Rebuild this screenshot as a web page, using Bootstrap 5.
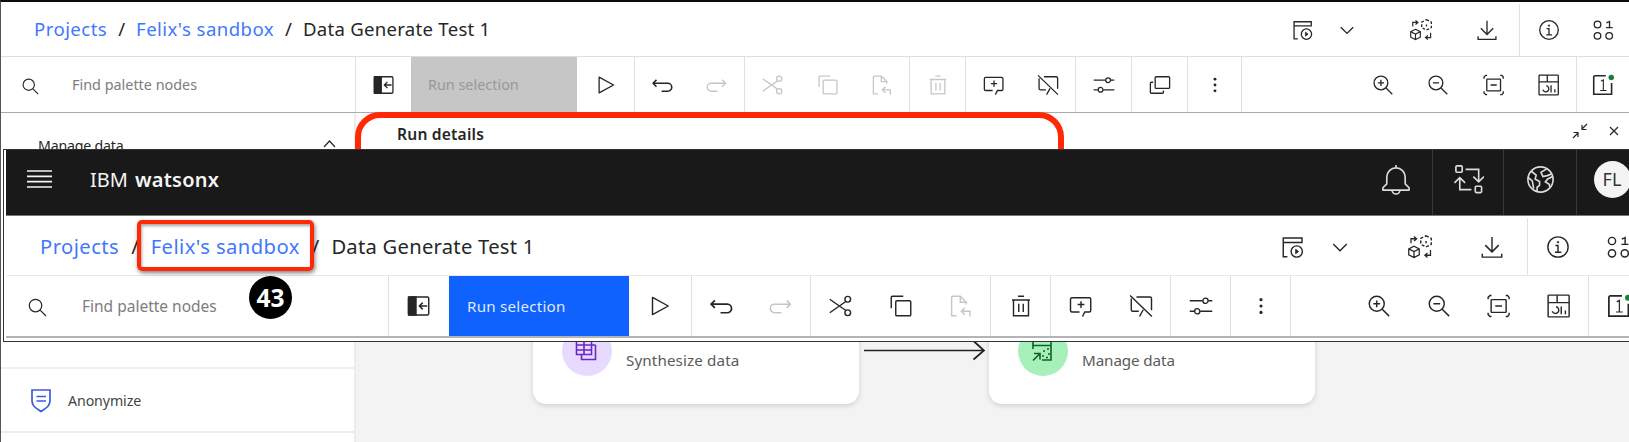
<!DOCTYPE html>
<html lang="en">
<head>
<meta charset="utf-8">
<title>IBM watsonx</title>
<link rel="stylesheet" href="https://cdn.jsdelivr.net/npm/bootstrap@5.3.0/dist/css/bootstrap.min.css">
<style>
body{width:1629px;height:442px;overflow:hidden;position:relative;background:#fff;font-family:"Noto Sans","Open Sans",sans-serif;color:#262626;line-height:1.2;white-space:nowrap}
svg{fill:none;stroke:currentColor;stroke-width:1.9;flex:none;overflow:visible}
.ic{width:22px;height:22px}
.cell{display:flex;align-items:center;justify-content:center;flex:none;width:55px}
.sep{border-right:1px solid #e0e0e0}
.dim{color:#c6c6c6}
a{color:#3f78ff;text-decoration:none}
.hint{color:#7d7d7d}
.path-part{letter-spacing:.44px}
.path-leaf{letter-spacing:.26px}
.base{height:442px;border-top:2px solid #0c0c0c;border-left:1px solid #555}
.base .crumbs{height:55px;border-bottom:1px solid #dedede;font-size:18.6px}
.base nav{gap:11px;padding:1px 0 0 33px}
.base .tools{height:56px;border-bottom:1px solid #aaa}
.base .find{width:355px;padding-left:20px;font-size:14.4px}
.base .find .hint{padding-top:1px}
.base .run{width:166px;background:#c6c6c6;color:#989898;font-size:14.4px;padding-left:17px;justify-content:flex-start}
.side{width:355px;border-right:2px solid #ececec;background:#fff}
.side .group{height:256px;padding:24px 18px 0 37px;font-size:14.2px;letter-spacing:-.2px;border-bottom:2px solid #efefef}
.side .group .chevron{margin-top:3px}
.side .group .sub{margin-top:174px}
.side .item{height:64px;border-bottom:2px solid #ececec;padding:2px 0 0 28px;font-size:14.2px;letter-spacing:-.1px;color:#444}
.details{height:60px;background:#fff}
.details .ring{left:-1px;top:-1px;width:709px;height:90px;border:6.5px solid #ff2a05;border-radius:25px}
.details h2{font-size:15.6px;font-weight:600;letter-spacing:.2px;margin:0;padding:12px 0 0 41px}
.stage{background:#f3f3f3}
.node{top:30px;width:326px;height:201px;background:#fff;border-radius:13px;box-shadow:0 2px 5px rgba(0,0,0,.14);font-size:15.2px;color:#5a5a5a}
.node .disc{width:50px;height:50px;border-radius:50%;margin:123px 14px 0 29px}
.node .kind{margin-top:148px}
.front{left:3px;top:149px;width:1626px;height:193px;background:#fff;border:1px solid #333;border-right:0;padding-left:2px;overflow:hidden}
.front .ic{width:24px;height:24px}
.front .cell{width:60px}
.front .top{height:66px;width:1650px;background:#191919;border-bottom:1px solid #777;color:#f4f4f4;font-size:20px}
.front .top .sep{border-color:#393939}
.front .top .brand{gap:7px;margin:-5px 0 0 38px}
.front .crumbs{height:60px;width:1650px;border-bottom:1px solid #e8e8e8;font-size:20.2px}
.front nav{gap:12px;padding:1px 0 0 34px}
.front .tools{height:62px;width:1650px;border-bottom:2px solid #b4b4b4}
.front .find{width:383px;padding-left:21px;font-size:15.5px}
.front .find .hint{padding-top:1px}
.front .run{width:180px;background:#0f62fe;color:#dfe9ff;font-size:15.2px;letter-spacing:.22px;padding-left:18px;justify-content:flex-start}
.front .top .ic{width:31px;height:31px;stroke-width:1.7;color:#dcdcdc}
.front .top .cell{padding-bottom:6px}
.avatar{width:37px;height:37px;border-radius:50%;background:#f4f4f4;color:#333;font-size:18px}
.mark-box{left:137px;top:220px;width:177px;height:51px;border:4.5px solid #ff2a05;border-radius:5px;box-shadow:1px 2px 4px rgba(0,0,0,.5),inset 1px 2px 3px rgba(0,0,0,.35)}
.step{left:249px;top:276px;width:43px;height:43px;border-radius:50%;background:#000;color:#fff;font:700 24.5px "Open Sans",sans-serif}
.step span{margin-top:-1px}
</style>
</head>
<body>
<svg width="0" height="0" class="position-absolute">
<symbol id="search" viewBox="0 0 32 32"><circle cx="13" cy="13" r="9.5"/><path d="M20 20l9 9"/></symbol>
<symbol id="panel" viewBox="0 0 32 32"><rect x="2" y="4" width="27" height="24" rx="2"/><path d="M2 4h10v24H2z" fill="currentColor"/><path d="M27 16H17M21 11.500l-4.500 4.500 4.500 4.500"/></symbol>
<symbol id="play" viewBox="0 0 32 32"><path d="M6 4.500L27 16 6 27.500z" stroke-linejoin="round"/></symbol>
<symbol id="undo" viewBox="0 0 32 32"><path d="M6.500 8.500L1.500 13.500l5 5M1.500 13.500h21.500a5.700 5.700 0 0 1 0 11.500h-9" stroke-width="2.300"/></symbol>
<symbol id="redo" viewBox="0 0 32 32"><path d="M23.500 8.500l5 5-5 5M28.500 13.500h-21a5.700 5.700 0 0 0 0 11.500h9" stroke-width="2"/></symbol>
<symbol id="cut" viewBox="0 0 32 32"><circle cx="25" cy="7" r="3.800"/><circle cx="25" cy="25" r="3.800"/><path d="M1 7l21.500 15M1 25L22.500 10"/></symbol>
<symbol id="copy" viewBox="0 0 32 32"><rect x="9" y="9" width="20" height="20" rx="1.500"/><path d="M3 19V4.500A1.500 1.500 0 0 1 4.500 3H19"/></symbol>
<symbol id="paste" viewBox="0 0 32 32"><path d="M10 29H3.500V4.500A1.500 1.500 0 0 1 5 3h10l8 8v3M15 3v8h8M28 30v-7H17M21 18.500L16.500 23l4.500 4.500"/></symbol>
<symbol id="trash" viewBox="0 0 32 32"><path d="M4 8h24M12 3h8M6 8v21h20V8M13 13v11M19 13v11"/></symbol>
<symbol id="note" viewBox="0 0 32 32"><path d="M14 24H4a2 2 0 0 1-2-2V7a2 2 0 0 1 2-2h23a2 2 0 0 1 2 2v15a2 2 0 0 1-2 2h-6l-3 6M16 9.500v9M11.500 14h9"/></symbol>
<symbol id="noteoff" viewBox="0 0 32 32"><path d="M1.500 2l29 28M10 4h18a2 2 0 0 1 2 2v15.500M3 6v15a2 2 0 0 0 2 2h8M14 30l5-9"/></symbol>
<symbol id="sliders" viewBox="0 0 32 32"><path d="M1 9h17M26 9h5M1 23h6M15 23h16"/><circle cx="22" cy="9" r="3.500"/><circle cx="11" cy="23" r="3.500"/></symbol>
<symbol id="windows" viewBox="0 0 32 32"><rect x="9" y="4" width="21" height="17" rx="1.500"/><path d="M6 12H3.500A1.500 1.500 0 0 0 2 13.500v13A1.500 1.500 0 0 0 3.500 28h16a1.500 1.500 0 0 0 1.500-1.500V24"/></symbol>
<symbol id="dots" viewBox="0 0 32 32"><g fill="currentColor" stroke="none"><circle cx="16" cy="7.500" r="2.100"/><circle cx="16" cy="16" r="2.100"/><circle cx="16" cy="24.500" r="2.100"/></g></symbol>
<symbol id="zoomin" viewBox="0 0 32 32"><circle cx="13" cy="13" r="10"/><path d="M20 20l9.500 9.500M13 8.500v9M8.500 13h9"/></symbol>
<symbol id="zoomout" viewBox="0 0 32 32"><circle cx="13" cy="13" r="10"/><path d="M20 20l9.500 9.500M8.500 13h9"/></symbol>
<symbol id="fit" viewBox="0 0 32 32"><rect x="5.500" y="7.500" width="20" height="17" rx="1"/><path d="M11 16h9M1.500 7V4.500L4 2h2M25 2h2.500L29.500 4.500V7M1.500 25v2.500L4 30h2M25 30h2.500l2-2.500V25"/></symbol>
<symbol id="dash" viewBox="0 0 32 32"><rect x="1.500" y="1.500" width="28" height="29" rx="1"/><path d="M1.500 11.500h28M13.500 1.500v10M12 17a4.500 4.500 0 1 1-5 6M19 16.500V27M24.500 22v5"/></symbol>
<symbol id="count" viewBox="0 0 32 32"><path d="M20 2.500H4.500a2 2 0 0 0-2 2v25h26V13" stroke-width="2.300"/><path d="M13 10.500l3.500-2v15M12 24h9" stroke-width="1.600"/><circle cx="28" cy="5" r="4" fill="#198038" stroke="none"/></symbol>
<symbol id="job" viewBox="0 0 32 32"><path d="M8.500 29H3V4h25v7M3 10h25"/><circle cx="21" cy="22" r="7.500"/><path d="M19.500 19l4 3-4 3z" fill="currentColor" stroke-width="1"/></symbol>
<symbol id="chev" viewBox="0 0 32 32"><path d="M7 12L16 21 25 12"/></symbol>
<symbol id="cube" viewBox="0 0 32 32"><path d="M8 15l7 3.500v8L8 30l-7-3.500v-8zM1 18.500L8 22l7-3.500M8 22v8M4 11V5h7M8 2l3.500 3L8 8M30 20v7h-7M26 24l-3.500 3 3.500 3" stroke-width="1.700"/><path d="M24 1l7 3.500v8L24 16l-7-3.500v-8zM24 8v3" stroke-dasharray="4 2.500" stroke-width="1.900"/></symbol>
<symbol id="down" viewBox="0 0 32 32"><path d="M16 2.500V22M7 13.500l9 9 9-9M3 25v4.500h26V25"/></symbol>
<symbol id="info" viewBox="0 0 32 32"><circle cx="16" cy="16" r="13.500"/><path d="M12.500 14H16v9M12 23h8.500"/><circle cx="16" cy="9.500" r="1.300" fill="currentColor" stroke-width=".5"/></symbol>
<symbol id="bits" viewBox="0 0 32 32"><circle cx="8" cy="8" r="4.800"/><circle cx="8" cy="24.500" r="4.800"/><circle cx="25" cy="24.500" r="4.800"/><path d="M21 5.500l4.500-2v9M20.500 12.500h9.500"/></symbol>
<symbol id="bell" viewBox="0 0 32 32"><path d="M16.500 1v3M16.500 4a9.500 9.500 0 0 0-9.500 9.500v7l-4 4v2.500h27v-2.500l-4-4v-7A9.500 9.500 0 0 0 16.500 4zM12.500 27a4 4 0 0 0 8 0" stroke-linejoin="round"/></symbol>
<symbol id="swap" viewBox="0 0 32 32"><rect x="3" y="2" width="6.500" height="6.500" rx="1"/><rect x="23" y="23" width="6.500" height="6.500" rx="1"/><path d="M13 5.500h13.500V18M21 13l5.500 5.500L32 13M19 26.500H7V14M1.500 19.500L7 14l5.500 5.500"/></symbol>
<symbol id="globe" viewBox="0 0 32 32"><circle cx="16" cy="16" r="13"/><path d="M6.500 7.500l5 4-1 4 4.500 2.500v4l-2.500 2v4.500M3.500 14l4 3.500 1.500 8M22.500 5l-6 3.500 2 4.500 4.500-1 5-2M28.500 13l-5 2.500-2.500 3 4 2.500 1 4"/></symbol>
</svg>

<main class="base d-flex flex-column">
  <header class="crumbs d-flex align-items-center flex-shrink-0">
    <nav class="d-flex">
      <a href="#" class="path-part">Projects</a><span>/</span><a href="#" class="path-part">Felix's sandbox</a><span>/</span><span class="path-leaf">Data Generate Test 1</span>
    </nav>
    <div class="d-flex h-100 ms-auto" style="padding-top:2px">
      <div class="cell" style="width:45px"><svg class="ic"><use href="#job"/></svg></div>
      <div class="cell" style="width:44px"><svg class="ic"><use href="#chev"/></svg></div>
      <div class="cell" style="width:68px;margin-left:18px"><svg class="ic"><use href="#cube"/></svg></div>
      <div class="cell sep" style="width:65px"><svg class="ic"><use href="#down"/></svg></div>
      <div class="cell" style="width:57px"><svg class="ic"><use href="#info"/></svg></div>
      <div class="cell" style="width:52px"><svg class="ic"><use href="#bits"/></svg></div>
    </div>
  </header>
  <div class="tools d-flex flex-shrink-0">
    <div class="find sep d-flex align-items-center flex-shrink-0"><svg style="width:19px;height:19px;margin-top:3px"><use href="#search"/></svg><span class="hint" style="margin-left:32px">Find palette nodes</span></div>
    <div class="cell"><svg class="ic"><use href="#panel"/></svg></div>
    <div class="cell run"><span>Run selection</span></div>
    <div class="cell sep" style="width:58px"><svg class="ic"><use href="#play"/></svg></div>
    <div class="cell"><svg class="ic"><use href="#undo"/></svg></div>
    <div class="cell dim sep"><svg class="ic"><use href="#redo"/></svg></div>
    <div class="cell dim"><svg class="ic"><use href="#cut"/></svg></div>
    <div class="cell dim"><svg class="ic"><use href="#copy"/></svg></div>
    <div class="cell dim sep"><svg class="ic"><use href="#paste"/></svg></div>
    <div class="cell dim sep" style="width:56px"><svg class="ic"><use href="#trash"/></svg></div>
    <div class="cell"><svg class="ic"><use href="#note"/></svg></div>
    <div class="cell sep"><svg class="ic"><use href="#noteoff"/></svg></div>
    <div class="cell sep" style="width:56px"><svg class="ic"><use href="#sliders"/></svg></div>
    <div class="cell sep" style="width:56px"><svg class="ic"><use href="#windows"/></svg></div>
    <div class="cell sep" style="width:54px"><svg class="ic"><use href="#dots"/></svg></div>
    <div class="d-flex ms-auto">
      <div class="cell"><svg class="ic"><use href="#zoomin"/></svg></div>
      <div class="cell" style="width:56px"><svg class="ic"><use href="#zoomout"/></svg></div>
      <div class="cell"><svg class="ic"><use href="#fit"/></svg></div>
      <div class="cell sep" style="width:56px"><svg class="ic"><use href="#dash"/></svg></div>
      <div class="cell" style="width:52px"><svg class="ic"><use href="#count"/></svg></div>
    </div>
  </div>
  <div class="d-flex flex-grow-1">
    <aside class="side flex-shrink-0">
      <div class="group">
        <div class="d-flex justify-content-between align-items-start"><span>Manage data</span><svg class="chevron" width="13" height="8" viewBox="0 0 13 8"><path stroke-width="1.200" d="M1 7l5.500-6L12 7"/></svg></div>
        <div class="sub">Mask data</div>
      </div>
      <div class="item d-flex align-items-center"><svg width="24" height="26" viewBox="0 0 24 26"><path stroke="#3a5be0" stroke-width="1.700" d="M3 2h18v11c0 5-4 7-9 10.500C7 20 3 18 3 13zM7.500 8.500h9.500M7.500 13h9.500"/></svg><span style="margin-left:15px">Anonymize</span></div>
    </aside>
    <div class="flex-grow-1 d-flex flex-column">
      <section class="details position-relative flex-shrink-0">
        <div class="ring position-absolute"></div>
        <div class="d-flex justify-content-between">
          <h2>Run details</h2>
          <div class="d-flex" style="padding:10px 10px 0 0;gap:21px">
            <svg width="16" height="16" viewBox="0 0 16 16"><path stroke-width="1.200" d="M15 1l-5 5M10 2v4.500h4.500M1 15l5-5M1.500 9.500H6V14"/></svg>
            <svg width="10" height="16" viewBox="0 0 10 16"><path stroke-width="1.200" d="M1 4l8 8M9 4l-8 8"/></svg>
          </div>
        </div>
      </section>
      <section class="stage flex-grow-1 position-relative">
        <article class="node position-absolute d-flex" style="left:177px"><span class="disc d-flex align-items-center justify-content-center" style="background:#e8daff"><svg width="22" height="22" viewBox="0 0 22 22"><path stroke="#6929c4" stroke-width="1.600" d="M.5 0h15v14.500H.5zM.5 5h15M.5 10h15M8 0v14.500M19.500 5v14.500h-14v-5M16 5h3.500"/></svg></span><span class="kind" style="letter-spacing:.12px">Synthesize data</span></article>
        <svg class="position-absolute" style="left:508px;top:166px" width="122" height="24" viewBox="0 0 122 24"><path stroke="#222" stroke-width="1.700" d="M0 11.500h120M109.500 2L120 11.500l-10.500 9"/></svg>
        <article class="node position-absolute d-flex" style="left:633px"><span class="disc d-flex align-items-center justify-content-center" style="background:#a7f0ba"><svg width="22" height="22" viewBox="0 0 22 22"><path stroke="#0e6027" stroke-width="1.600" d="M1 9V0h18v20h-9M1 5.500h18M1 20.500L7.500 14M2 13.500h6v6M11 11h2M16 14h2M10 16h2M14 17.500h2M15 9h2"/></svg></span><span class="kind" style="letter-spacing:-.1px">Manage data</span></article>
      </section>
    </div>
  </div>
</main>

<section class="front position-absolute">
  <header class="top d-flex align-items-center">
    <svg width="25" height="20" viewBox="0 0 25 20" style="margin-left:21px;margin-top:-7px"><path stroke-width="1.700" d="M0 2h25M0 7.300h25M0 12.700h25M0 18h25"/></svg>
    <div class="brand d-flex"><span>IBM</span><b class="fw-semibold" style="letter-spacing:.25px">watsonx</b></div>
    <div class="d-flex h-100 ms-auto">
      <div class="cell sep" style="width:74px"><svg class="ic"><use href="#bell"/></svg></div>
      <div class="cell sep" style="width:71px"><svg class="ic"><use href="#swap"/></svg></div>
      <div class="cell sep" style="width:73px"><svg class="ic"><use href="#globe"/></svg></div>
      <div class="cell" style="width:79px;padding-right:9px"><span class="avatar d-flex align-items-center justify-content-center">FL</span></div>
    </div>
  </header>
  <div class="crumbs d-flex align-items-center">
    <nav class="d-flex"><a href="#" class="path-part">Projects</a><span>/</span><a href="#" class="path-part">Felix's sandbox</a><span>/</span><span class="path-leaf">Data Generate Test 1</span></nav>
    <div class="d-flex h-100 ms-auto" style="padding:2px 8px 0 0">
      <div class="cell" style="width:49px"><svg class="ic"><use href="#job"/></svg></div>
      <div class="cell" style="width:46px"><svg class="ic"><use href="#chev"/></svg></div>
      <div class="cell" style="width:73px;margin-left:20px"><svg class="ic"><use href="#cube"/></svg></div>
      <div class="cell sep" style="width:72px"><svg class="ic"><use href="#down"/></svg></div>
      <div class="cell"><svg class="ic"><use href="#info"/></svg></div>
      <div class="cell"><svg class="ic"><use href="#bits"/></svg></div>
    </div>
  </div>
  <div class="tools d-flex">
    <div class="find sep d-flex align-items-center flex-shrink-0"><svg style="width:21px;height:21px;margin-top:2px"><use href="#search"/></svg><span class="hint" style="margin-left:34px">Find palette nodes</span></div>
    <div class="cell"><svg class="ic"><use href="#panel"/></svg></div>
    <div class="cell run"><span>Run selection</span></div>
    <div class="cell sep" style="width:63px"><svg class="ic"><use href="#play"/></svg></div>
    <div class="cell"><svg class="ic"><use href="#undo"/></svg></div>
    <div class="cell dim sep" style="width:59px"><svg class="ic"><use href="#redo"/></svg></div>
    <div class="cell"><svg class="ic"><use href="#cut"/></svg></div>
    <div class="cell"><svg class="ic"><use href="#copy"/></svg></div>
    <div class="cell dim sep"><svg class="ic"><use href="#paste"/></svg></div>
    <div class="cell sep"><svg class="ic"><use href="#trash"/></svg></div>
    <div class="cell"><svg class="ic"><use href="#note"/></svg></div>
    <div class="cell sep"><svg class="ic"><use href="#noteoff"/></svg></div>
    <div class="cell sep"><svg class="ic"><use href="#sliders"/></svg></div>
    <div class="cell sep"><svg class="ic"><use href="#dots"/></svg></div>
    <div class="d-flex" style="margin-left:58px">
      <div class="cell"><svg class="ic"><use href="#zoomin"/></svg></div>
      <div class="cell"><svg class="ic"><use href="#zoomout"/></svg></div>
      <div class="cell"><svg class="ic"><use href="#fit"/></svg></div>
      <div class="cell sep"><svg class="ic"><use href="#dash"/></svg></div>
      <div class="cell"><svg class="ic"><use href="#count"/></svg></div>
    </div>
  </div>
</section>
<div class="mark-box position-absolute"></div>
<div class="step position-absolute d-flex align-items-center justify-content-center"><span>43</span></div>
<script src="https://cdn.jsdelivr.net/npm/bootstrap@5.3.0/dist/js/bootstrap.bundle.min.js"></script>
</body>
</html>
